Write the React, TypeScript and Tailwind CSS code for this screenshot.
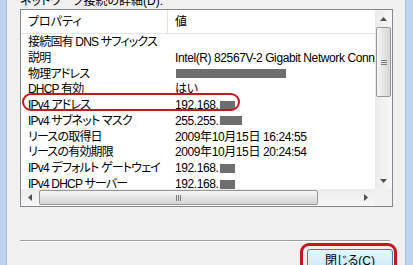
import { ReactNode } from 'react'

type Row = {
  label: string
  value?: string
  mask?: number
  circled?: boolean
}

const rows: Row[] = [
  { label: '接続固有 DNS サフィックス' },
  { label: '説明', value: 'Intel(R) 82567V-2 Gigabit Network Connection' },
  { label: '物理アドレス', mask: 110 },
  { label: 'DHCP 有効', value: 'はい' },
  { label: 'IPv4 アドレス', value: '192.168.', mask: 15, circled: true },
  { label: 'IPv4 サブネット マスク', value: '255.255.', mask: 22 },
  { label: 'リースの取得日', value: '2009年10月15日 16:24:55' },
  { label: 'リースの有効期限', value: '2009年10月15日 20:24:54' },
  { label: 'IPv4 デフォルト ゲートウェイ', value: '192.168.', mask: 15 },
  { label: 'IPv4 DHCP サーバー', value: '192.168.', mask: 15 },
]

function Arrow({ dir }: { dir: 'up' | 'down' | 'left' | 'right' }) {
  const points = {
    up: '0,4 3.5,0 7,4',
    down: '0,0 3.5,4 7,0',
    left: '4,0 0,3.5 4,7',
    right: '0,0 4,3.5 0,7',
  }[dir]
  const vertical = dir === 'up' || dir === 'down'
  return (
    <svg width={vertical ? 7 : 4} height={vertical ? 4 : 7} className="block">
      <polygon points={points} fill="#505050" />
    </svg>
  )
}

function PropertyRow({ row }: { row: Row }) {
  return (
    <div className="flex h-[15.8px] items-center whitespace-nowrap">
      <div className="relative w-[147px] shrink-0 pl-[7px] tracking-[-0.8px]">
        {row.label}
        {row.circled && (
          <div className="pointer-events-none absolute left-[1px] top-[-3px] h-[18px] w-[218px] rounded-[9px] border-2 border-[#c4161c]" />
        )}
      </div>
      <div className="flex items-center pl-[7px] tracking-[-0.4px]">
        {row.value && <span>{row.value}</span>}
        {row.mask && <span className="ml-[1px] inline-block h-[9px] bg-[#6e6e6e]" style={{ width: row.mask }} />}
      </div>
    </div>
  )
}

function ScrollCell({ children, className = '' }: { children: ReactNode; className?: string }) {
  return <div className={`flex items-center justify-center ${className}`}>{children}</div>
}

export default function App() {
  return (
    <div className="flex h-[265px] w-[413px] overflow-hidden bg-[#f0f0f0] font-[family-name:'Liberation_Sans','Noto_Sans_CJK_JP',sans-serif] text-[12px] text-black [font-feature-settings:'palt']">
      <div className="w-[7px] shrink-0 border-r border-[#a8c0dc] bg-[#bcd4ec]" />

      <div className="flex flex-1 flex-col pl-[13px] pr-[12px]">
        <div className="-mt-[7px] h-[16px] leading-[16px] whitespace-nowrap">ネットワーク接続の詳細(D):</div>

        <div className="grid h-[198px] w-[373px] grid-cols-[1fr_17px] grid-rows-[1fr_17px] border border-[#828790] bg-white">
          <div className="overflow-hidden">
            <div className="flex h-[24px] items-center border-b border-[#e3e3e3] whitespace-nowrap">
              <div className="h-full w-[147px] shrink-0 border-r border-[#e3e3e3] pl-[7px] leading-[24px]">プロパティ</div>
              <div className="pl-[7px]">値</div>
            </div>
            <div>
              {rows.map((row) => (
                <PropertyRow key={row.label} row={row} />
              ))}
            </div>
          </div>

          <div className="flex flex-col bg-gradient-to-r from-[#ebebeb] to-[#f7f7f7]">
            <ScrollCell className="h-[17px]">
              <Arrow dir="up" />
            </ScrollCell>
            <div className="mx-[1px] flex h-[70px] items-center justify-center rounded-[2px] border border-[#979797] bg-gradient-to-r from-[#f6f6f6] to-[#d5d5d5]">
              <div className="flex flex-col gap-[1px]">
                <div className="h-px w-[6px] bg-[#7a7a7a]" />
                <div className="h-px w-[6px] bg-[#7a7a7a]" />
                <div className="h-px w-[6px] bg-[#7a7a7a]" />
              </div>
            </div>
            <div className="flex-1" />
            <ScrollCell className="h-[17px]">
              <Arrow dir="down" />
            </ScrollCell>
          </div>

          <div className="flex bg-gradient-to-b from-[#ebebeb] to-[#f7f7f7]">
            <ScrollCell className="w-[18px]">
              <Arrow dir="left" />
            </ScrollCell>
            <div className="my-[1px] flex w-[279px] items-center justify-center rounded-[2px] border border-[#979797] bg-gradient-to-b from-[#f6f6f6] to-[#d5d5d5]">
              <div className="flex gap-[1px]">
                <div className="h-[6px] w-px bg-[#7a7a7a]" />
                <div className="h-[6px] w-px bg-[#7a7a7a]" />
                <div className="h-[6px] w-px bg-[#7a7a7a]" />
              </div>
            </div>
            <div className="flex-1" />
            <ScrollCell className="w-[18px]">
              <Arrow dir="right" />
            </ScrollCell>
          </div>
          <div className="bg-[#f0f0f0]" />
        </div>

        <div className="mt-[33px] w-[370px] border-t border-b border-t-[#a0a0a0] border-b-white" />

        <div className="mt-[7px] flex justify-end">
          <div className="relative">
            <div className="pointer-events-none absolute -left-[7px] -top-[6px] h-[40px] w-[97px] rounded-[9px] border-[3px] border-[#c4161c]" />
            <button className="flex h-[23px] w-[86px] items-center justify-center rounded-[3px] border border-[#3c7fb1] bg-gradient-to-b from-[#eaf6fd] via-[#d9f0fc] to-[#bee6fd] text-[12px]">
              閉じる(<span className="underline">C</span>)
            </button>
          </div>
        </div>
      </div>

      <div className="w-[8px] shrink-0 border-l border-[#a8c0dc] bg-[#bcd4ec]" />
    </div>
  )
}
